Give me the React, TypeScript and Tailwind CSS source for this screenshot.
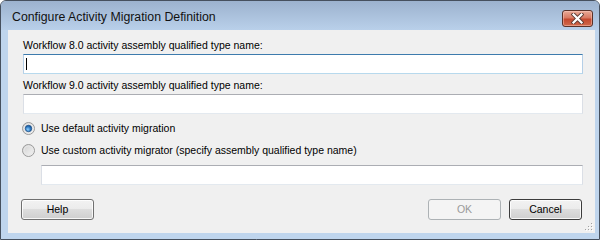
import React from "react";

function Radio({ checked }: { checked?: boolean }) {
  return (
    <svg width="13" height="13" viewBox="0 0 13 13" className="shrink-0">
      <defs>
        <linearGradient id={checked ? "rg1" : "rg0"} x1="0" y1="0" x2="1" y2="1">
          <stop offset="0" stopColor="#cfcfcf" />
          <stop offset="1" stopColor="#f7f7f7" />
        </linearGradient>
        <radialGradient id="dot" cx="0.4" cy="0.65" r="0.7">
          <stop offset="0" stopColor="#8fd0ff" />
          <stop offset="0.6" stopColor="#2b78c2" />
          <stop offset="1" stopColor="#0e4b8c" />
        </radialGradient>
      </defs>
      <circle cx="6.5" cy="6.5" r="6" fill={`url(#${checked ? "rg1" : "rg0"})`} stroke="#9a9a9a" strokeWidth="1" />
      <circle cx="6.5" cy="6.5" r="4.5" fill="none" stroke="#e8e8e8" strokeWidth="1" />
      {checked && <circle cx="6.5" cy="6.5" r="3.2" fill="url(#dot)" stroke="#1d4f86" strokeWidth="0.8" />}
    </svg>
  );
}

function CloseBtn() {
  return (
    <div className="ml-auto w-[31px] h-[17px] rounded-[3px] border border-[#5a3229] bg-[linear-gradient(to_bottom,#e9ab98_0%,#d97a63_45%,#c4492f_55%,#d06a4c_100%)] flex items-center justify-center shadow-[inset_0_0_0_1px_rgba(255,210,200,0.45)]">
      <svg width="13" height="11" viewBox="0 0 13 11">
        <path d="M2.5 1.5 L10.5 9.5 M10.5 1.5 L2.5 9.5" stroke="#5b3a33" strokeWidth="4" strokeLinecap="square" />
        <path d="M2.5 1.5 L10.5 9.5 M10.5 1.5 L2.5 9.5" stroke="#ffffff" strokeWidth="2.2" strokeLinecap="square" />
      </svg>
    </div>
  );
}

function TextBox({ focused, className = "" }: { focused?: boolean; className?: string }) {
  return (
    <div
      className={
        "h-[20px] bg-white border flex items-center pl-[2px] " +
        (focused
          ? "border-x-[#b5cfe7] border-b-[#b7d9ed] border-t-[#3d7bad] "
          : "border-x-[#dbdfe6] border-b-[#e3e9ef] border-t-[#abadb3] ") +
        className
      }
    >
      {focused && <div className="w-px h-[12px] bg-black" />}
    </div>
  );
}

function Button({ label, disabled, dark }: { label: string; disabled?: boolean; dark?: boolean }) {
  return (
    <div
      className={
        "w-[73px] h-[21px] rounded-[3px] border flex items-center justify-center " +
        (disabled
          ? "border-[#adb2b5] bg-[#f4f4f4] text-[#9a9a9a]"
          : (dark ? "border-[#3c3c3c] " : "border-[#707070] ") +
            "bg-[linear-gradient(to_bottom,#f2f2f2_0%,#ebebeb_50%,#dddddd_50%,#cfcfcf_100%)] shadow-[inset_0_0_0_1px_rgba(255,255,255,0.8)]")
      }
    >
      {label}
    </div>
  );
}

export default function App() {
  return (
    <div className="w-[603px] h-[241px] bg-white font-['Liberation_Sans',Arial,sans-serif] text-black">
      <div className="w-[600px] h-[240px] flex flex-col rounded-t-[6px] border border-[#46505e] bg-[#bfd5ed] overflow-hidden">
        <div className="h-[29px] shrink-0 flex items-start pt-[9px] pl-[11px] pr-[6px] bg-[linear-gradient(to_bottom,#9cb2ce,#b9d0ea)]">
          <span className="text-[12.3px] leading-[15px] text-[#111]">Configure Activity Migration Definition</span>
          <CloseBtn />
        </div>
        <div className="flex-1 flex pl-[7px] pr-[4px] pb-[6px]">
          <div className="relative flex-1 bg-[#f0f0f0] flex flex-col pl-[15px] pr-[12px] text-[10.5px] leading-[13px]">
            <div className="mt-[9px] h-[13px]">Workflow 8.0 activity assembly qualified type name:</div>
            <TextBox focused className="mt-[2px]" />
            <div className="mt-[5px] h-[13px]">Workflow 9.0 activity assembly qualified type name:</div>
            <TextBox className="mt-[2px]" />
            <div className="mt-[8px] h-[13px] flex items-center gap-[6px] -ml-[1px]">
              <Radio checked />
              <span>Use default activity migration</span>
            </div>
            <div className="mt-[9px] h-[13px] flex items-center gap-[6px] -ml-[1px]">
              <Radio />
              <span>Use custom activity migrator (specify assembly qualified type name)</span>
            </div>
            <TextBox className="mt-[8px] ml-[18px]" />
            <div className="mt-[14px] flex -ml-[2px] mr-[1px]">
              <Button label="Help" />
              <div className="ml-auto flex gap-[8px]">
                <Button label="OK" disabled />
                <Button label="Cancel" dark />
              </div>
            </div>
            <svg width="8" height="8" viewBox="0 0 8 8" className="absolute right-[2px] bottom-[2px]">
              {[
                [6, 0], [6, 3], [3, 3], [6, 6], [3, 6], [0, 6],
              ].map(([x, y], i) => (
                <g key={i}>
                  <rect x={x + 1} y={y + 1} width="1" height="1" fill="#ffffff" />
                  <rect x={x} y={y} width="1" height="1" fill="#a0a0a0" />
                </g>
              ))}
            </svg>
          </div>
        </div>
      </div>
    </div>
  );
}
